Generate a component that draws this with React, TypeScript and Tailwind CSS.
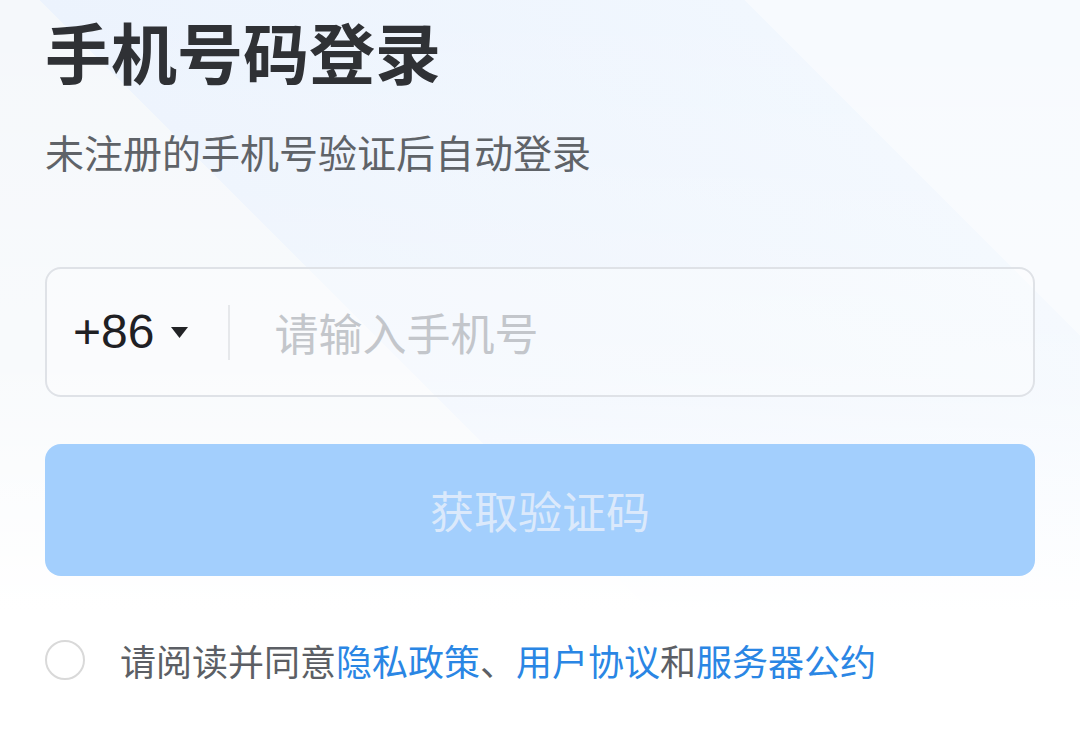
import React from 'react';

export default function App() {
  return (
    <div className="min-h-[745px] w-full bg-[linear-gradient(to_bottom,rgba(255,255,255,0)_0%,rgba(255,255,255,0.35)_50%,#ffffff_82%),linear-gradient(45deg,#f5f8fb_555px,#ecf3fd_555px,#f1f7fe_1053px,#f7fafe_1053px)] font-['Noto_Sans_CJK_SC',sans-serif]">
      <div className="flex flex-col px-[45px] pt-[17px]">
        {/* Heading */}
        <h1 className="text-[66px] leading-[66px] font-bold text-[#2f3135]">手机号码登录</h1>
        <p className="mt-[49px] text-[39px] leading-[39px] text-[#5f6368]">未注册的手机号验证后自动登录</p>

        {/* Phone input */}
        <div className="mt-[96px] flex h-[130px] items-center rounded-[16px] border-2 border-[#dfe2e7] bg-white/30 pl-[26px]">
          <div className="flex items-center">
            <span className="font-['Liberation_Sans',sans-serif] text-[48px] leading-none text-[#1f2024]">+86</span>
            <svg className="ml-[17px]" width="17" height="11" viewBox="0 0 17 11">
              <path d="M0 0h17L8.5 11z" fill="#222326" />
            </svg>
          </div>
          <div className="ml-[40px] h-[55px] w-[2px] bg-[#e6e8eb]" />
          <input
            type="tel"
            placeholder="请输入手机号"
            className="ml-[44px] flex-1 bg-transparent text-[44px] leading-[50px] text-[#1f2024] outline-none placeholder:text-[#c3c6cb]"
          />
        </div>

        {/* Submit */}
        <button className="mt-[47px] flex h-[132px] items-center justify-center rounded-[16px] bg-[#a3cffd] text-[44px] text-[#dbe9fb]">
          获取验证码
        </button>

        {/* Agreement */}
        <div className="mt-[64px] flex items-center">
          <span className="h-[40px] w-[40px] shrink-0 rounded-full border-2 border-[#d9d9d9]" />
          <p className="ml-[35px] text-[36px] leading-[40px] text-[#5c5f65]">
            请阅读并同意<span className="text-[#2a86e4]">隐私政策</span>、<span className="text-[#2a86e4]">用户协议</span>和<span className="text-[#2a86e4]">服务器公约</span>
          </p>
        </div>
      </div>
    </div>
  );
}
